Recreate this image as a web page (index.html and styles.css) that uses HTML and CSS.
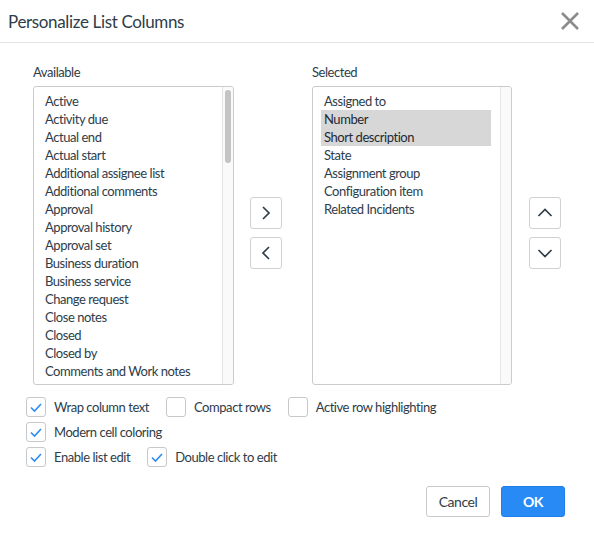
FILE: index.html
```html
<!DOCTYPE html>
<html lang="en">
<head>
  <meta charset="UTF-8">
  <title>Personalize List Columns</title>
  <link rel="stylesheet" href="styles.css">
</head>
<body>
  <div class="dialog">
    <div class="dialog-header">
      <h1>Personalize List Columns</h1>
      <button class="close-btn" aria-label="Close">
        <svg width="20" height="20" viewBox="0 0 20 20"><path d="M2 2 L18 18 M18 2 L2 18" stroke="#8c8c8c" stroke-width="2.6" fill="none"/></svg>
      </button>
    </div>

    <div class="dialog-body">
      <div class="columns">
        <div class="col col-available">
          <div class="col-label">Available</div>
          <div class="list-box">
            <ul class="items" id="availableList"></ul>
            <div class="scrollbar"><div class="thumb"></div></div>
          </div>
        </div>

        <div class="move-btns add-remove">
          <button class="icon-btn" aria-label="Add">
            <svg width="14" height="14" viewBox="0 0 14 14"><path d="M4 1 L10 7 L4 13" stroke="#2e3d49" stroke-width="1.7" fill="none"/></svg>
          </button>
          <button class="icon-btn" aria-label="Remove">
            <svg width="14" height="14" viewBox="0 0 14 14"><path d="M10 1 L4 7 L10 13" stroke="#2e3d49" stroke-width="1.7" fill="none"/></svg>
          </button>
        </div>

        <div class="col col-selected">
          <div class="col-label">Selected</div>
          <div class="list-box">
            <ul class="items" id="selectedList"></ul>
            <div class="scrollbar"></div>
          </div>
        </div>

        <div class="move-btns up-down">
          <button class="icon-btn" aria-label="Move up">
            <svg width="16" height="16" viewBox="0 0 16 16"><path d="M1.5 11 L8 4.5 L14.5 11" stroke="#2e3d49" stroke-width="1.7" fill="none"/></svg>
          </button>
          <button class="icon-btn" aria-label="Move down">
            <svg width="16" height="16" viewBox="0 0 16 16"><path d="M1.5 5 L8 11.5 L14.5 5" stroke="#2e3d49" stroke-width="1.7" fill="none"/></svg>
          </button>
        </div>
      </div>

      <div class="options">
        <div class="opt-row">
          <label class="opt"><span class="check on"></span><span>Wrap column text</span></label>
          <label class="opt"><span class="check"></span><span>Compact rows</span></label>
          <label class="opt"><span class="check"></span><span>Active row highlighting</span></label>
        </div>
        <div class="opt-row">
          <label class="opt"><span class="check on"></span><span>Modern cell coloring</span></label>
        </div>
        <div class="opt-row">
          <label class="opt"><span class="check on"></span><span>Enable list edit</span></label>
          <label class="opt"><span class="check on"></span><span>Double click to edit</span></label>
        </div>
      </div>
    </div>

    <div class="dialog-footer">
      <button class="btn">Cancel</button>
      <button class="btn btn-primary">OK</button>
    </div>
  </div>

  <script>
    // first screenful of the available columns
    const available = [
      'Active', 'Activity due', 'Actual end', 'Actual start', 'Additional assignee list',
      'Additional comments', 'Approval', 'Approval history', 'Approval set', 'Business duration',
      'Business service', 'Change request', 'Close notes', 'Closed', 'Closed by',
      'Comments and Work notes'
    ];
    const selected = [
      'Assigned to', 'Number', 'Short description', 'State',
      'Assignment group', 'Configuration item', 'Related Incidents'
    ];
    // rows picked in the Selected list
    const picked = ['Number', 'Short description'];

    function fillList(el, items, marked) {
      items.forEach(name => {
        const li = document.createElement('li');
        li.textContent = name;
        if (marked.includes(name)) li.classList.add('sel');
        el.appendChild(li);
      });
    }

    fillList(document.getElementById('availableList'), available, []);
    fillList(document.getElementById('selectedList'), selected, picked);
  </script>
</body>
</html>
```

FILE: styles.css
```css
body {
  margin: 0;
  background: #fff;
  font-family: Lato, "Open Sans", sans-serif;
  color: #2e3d49;
  letter-spacing: -0.45px;
}
button {
  font-family: inherit;
  letter-spacing: inherit;
}
.dialog {
  width: 594px;
}
/* Header */
.dialog-header {
  display: flex;
  align-items: center;
  justify-content: space-between;
  height: 42px;
  border-bottom: 1px solid #e2e4e6;
  padding: 0 14px 0 8px;
}
.dialog-header h1 {
  margin: 0;
  font-size: 17px;
  font-weight: 400;
  letter-spacing: -0.35px;
  color: #2e3d49;
}
.close-btn {
  border: none;
  background: none;
  padding: 0;
  width: 20px;
  height: 20px;
  cursor: pointer;
}
/* Columns */
.dialog-body {
  padding: 19px 0 0 26px;
}
.columns {
  display: flex;
  align-items: flex-start;
  padding-left: 7px;
}
.col-label {
  font-size: 13px;
  line-height: 20px;
  margin-bottom: 4px;
}
.list-box {
  display: flex;
  width: 201px;
  height: 299px;
  box-sizing: border-box;
  border: 1px solid #c9cbcd;
  border-radius: 3px;
  overflow: hidden;
}
.col-selected .list-box {
  width: 200px;
}
.items {
  flex: 1;
  list-style: none;
  margin: 0;
  padding: 5px 9px 5px 8px;
  font-size: 13px;
  line-height: 18px;
}
.items li {
  padding-left: 3px;
  white-space: nowrap;
  color: #2e3d49;
}
.items li.sel {
  background: #d7d7d7;
  color: #1f2a33;
}
.scrollbar {
  width: 10px;
  flex-shrink: 0;
  background: #fafafa;
  border-left: 1px solid #e6e6e6;
}
.thumb {
  width: 6px;
  height: 73px;
  margin: 3px 0 0 2px;
  border-radius: 3px;
  background: #c4c4c4;
}
.move-btns {
  display: flex;
  flex-direction: column;
  gap: 8px;
  margin-top: 135px;
}
.add-remove {
  margin-left: 16px;
  margin-right: 30px;
}
.up-down {
  margin-left: 17px;
}
.icon-btn {
  width: 32px;
  height: 32px;
  border: 1px solid #cfd1d3;
  border-radius: 3px;
  background: #fff;
  padding: 0;
  display: flex;
  align-items: center;
  justify-content: center;
  cursor: pointer;
}
/* Options */
.options {
  margin-top: 12px;
  display: flex;
  flex-direction: column;
  gap: 5px;
}
.opt-row {
  display: flex;
  gap: 17px;
}
.opt {
  display: flex;
  align-items: center;
  gap: 8px;
  font-size: 13px;
  line-height: 20px;
}
.check {
  width: 20px;
  height: 20px;
  flex-shrink: 0;
  box-sizing: border-box;
  border: 1px solid #c6c8ca;
  border-radius: 3px;
  background: #fff no-repeat center;
}
.check.on {
  background-image: url("data:image/svg+xml,%3Csvg xmlns='http://www.w3.org/2000/svg' width='18' height='18' viewBox='0 0 18 18'%3E%3Cpath d='M4 9.5 L7.5 13 L14 6' stroke='%232b8cf3' stroke-width='1.6' fill='none'/%3E%3C/svg%3E");
}
/* Footer */
.dialog-footer {
  display: flex;
  justify-content: flex-end;
  gap: 11px;
  padding: 19px 29px 0 0;
}
.btn {
  width: 64px;
  height: 31px;
  border: 1px solid #c8cacc;
  border-radius: 3px;
  background: #fff;
  color: #2e3d49;
  font-size: 14px;
  cursor: pointer;
}
.btn-primary {
  background: #288bf5;
  border-color: #1f7fe8;
  color: #fff;
  font-weight: 700;
}
```
